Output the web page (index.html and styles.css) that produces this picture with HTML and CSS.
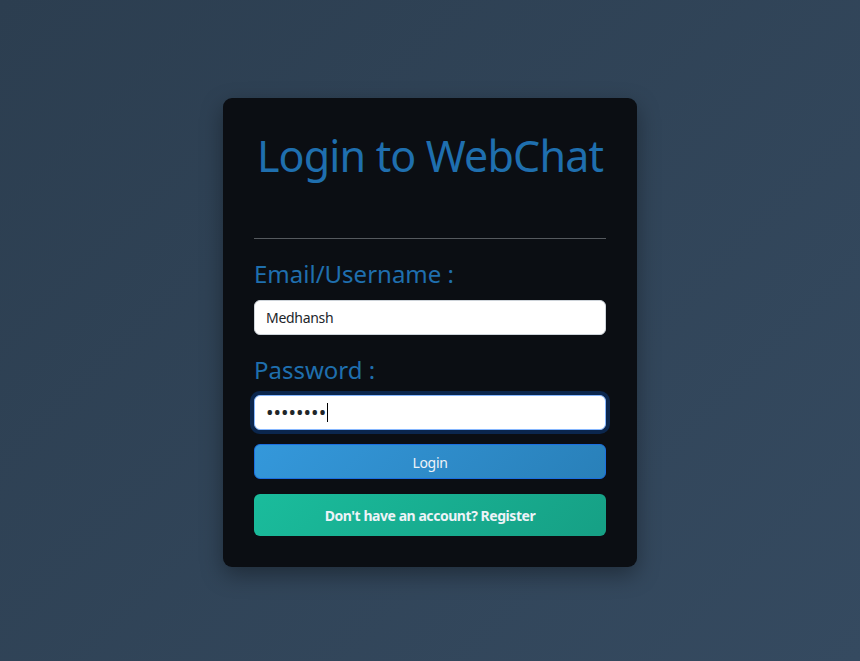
FILE: index.html
```html
<!DOCTYPE html>
<html lang="en">
<head>
<meta charset="utf-8">
<title>Login to WebChat</title>
<link rel="stylesheet" href="styles.css">
</head>
<body>
<main class="card">
  <h1 class="title">Login to WebChat</h1>
  <hr class="divider">
  <form class="form">
    <label class="label" for="user">Email/Username :</label>
    <input class="field" id="user" type="text" value="Medhansh">
    <label class="label label-pass" for="pass">Password :</label>
    <div class="field field-focus" id="pass"><span class="dots">••••••••</span><span class="caret"></span></div>
    <button class="btn btn-login" type="button">Login</button>
    <button class="btn btn-register" type="button">Don't have an account? Register</button>
  </form>
</main>
</body>
</html>
```
FILE: styles.css
```css
* { box-sizing: border-box; }
html, body { margin: 0; height: 100%; }
body {
  background: linear-gradient(135deg, #2c3e50 0%, #354a60 100%);
  font-family: "Noto Sans", "Open Sans", sans-serif;
  padding-top: 98px;
}
.card {
  width: 414px;
  margin: 0 auto;
  background: #0b0e13;
  border-radius: 9px;
  padding: 32px 31px 31px;
  box-shadow: 0 8px 22px rgba(0, 0, 0, 0.35);
}
.title {
  margin: 0;
  font-weight: 400;
  font-size: 43px;
  line-height: 52px;
  letter-spacing: -0.85px;
  text-align: center;
  color: #1f6fae;
  white-space: nowrap;
}
.divider {
  margin: 56px 0 0;
  border: 0;
  border-top: 1px solid #55595e;
  height: 0;
}
.form { display: flex; flex-direction: column; }
.label {
  margin-top: 20px;
  font-size: 24px;
  line-height: 29px;
  color: #1f6fae;
}
.field {
  margin-top: 12px;
  height: 35px;
  width: 100%;
  padding: 6px 11px;
  border: 1px solid #ced4da;
  border-radius: 6px;
  background: #fff;
  font-family: inherit;
  font-size: 14px;
  line-height: 21px;
  letter-spacing: -0.3px;
  color: #212529;
  outline: none;
}
.label-pass { margin-top: 20px; }
.field-focus {
  margin-top: 11px;
  border-color: #86b7fe;
  box-shadow: 0 0 0 4px rgba(13, 110, 253, 0.25);
  display: flex;
  align-items: center;
}
.dots {
  font-size: 20px;
  letter-spacing: 0;
  color: #212529;
}
.caret {
  width: 1px;
  height: 19px;
  background: #000;
  margin-left: 1px;
}
.btn {
  width: 100%;
  border-radius: 6px;
  font-family: inherit;
  font-size: 14px;
  line-height: 21px;
  color: #eef3f8;
  cursor: pointer;
}
.btn-login {
  margin-top: 14px;
  height: 35px;
  padding-top: 2px;
  border: 1px solid #1b6fe0;
  letter-spacing: -0.3px;
  background: linear-gradient(135deg, #3498db 0%, #2980b9 100%);
}
.btn-register {
  margin-top: 15px;
  height: 42px;
  border: 0;
  font-weight: 700;
  letter-spacing: -0.45px;
  background: linear-gradient(135deg, #1abc9c 0%, #16a085 100%);
}
```
